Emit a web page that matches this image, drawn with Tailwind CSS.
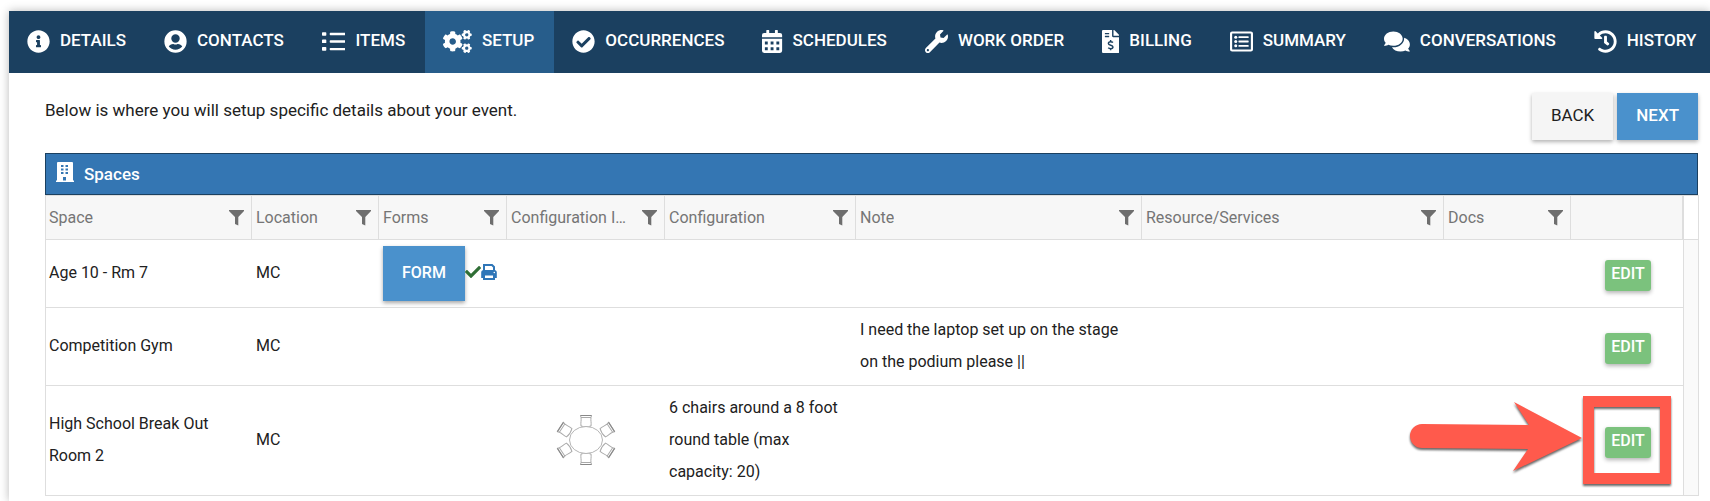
<!DOCTYPE html>
<html lang="en">
<head>
<meta charset="utf-8">
<title>Event Setup</title>
<script src="https://cdn.jsdelivr.net/npm/@tailwindcss/browser@4"></script>
</head>
<body class="bg-white font-['Roboto',sans-serif] text-[#212121] overflow-x-clip">
<svg class="hidden" aria-hidden="true">
  <symbol id="filter" viewBox="0 0 15 16"><path d="M0 0h15v1L9.3 7v8.5L6 14V7L0 1z"/></symbol>
  <symbol id="chair" viewBox="-7 -7 14 14"><path d="M-5.5-5.5h11L5-3.5c-.5 3 .5 5 0 8.500-3 1-7 1-10 0-.5-3.500.5-5.500 0-8.500zM-5-3.500h10" fill="#fff" stroke="#aaa"/><path d="M-5.500-5.500h11" stroke="#888"/></symbol>
</svg>
<div class="mt-[11px] ml-[9px] min-h-[490px] bg-white shadow-[0_0_9px_rgba(0,0,0,0.28)]">
  <nav aria-label="Event sections" class="flex h-[62px] overflow-hidden whitespace-nowrap bg-[#1b4060] text-[17px] font-medium text-white [&>a]:flex [&>a]:shrink-0 [&>a]:items-center [&>a]:gap-[10px] [&>a]:pl-[18px] [&>a]:pr-5 [&>a]:pb-[2px] [&>a:last-child]:pr-0 [&_svg]:h-[23px] [&_svg]:w-auto [&_svg]:fill-current">
    <a href="#details"><svg viewBox="0 0 512 512"><path d="M256 8C119.043 8 8 119.083 8 256c0 136.997 111.043 248 248 248s248-111.003 248-248C504 119.083 392.957 8 256 8zm0 110c23.196 0 42 18.804 42 42s-18.804 42-42 42-42-18.804-42-42 18.804-42 42-42zm56 254c0 6.627-5.373 12-12 12h-88c-6.627 0-12-5.373-12-12v-24c0-6.627 5.373-12 12-12h12v-64h-12c-6.627 0-12-5.373-12-12v-24c0-6.627 5.373-12 12-12h64c6.627 0 12 5.373 12 12v100h12c6.627 0 12 5.373 12 12v24z"/></svg>DETAILS</a>
    <a href="#contacts"><svg viewBox="0 0 512 512"><path fill-rule="evenodd" d="M256 8a248 248 0 1 0 0 496 248 248 0 0 0 0-496zm0 88a94 94 0 1 1 0 188 94 94 0 0 1 0-188zm0 344c-61 0-115-27-150-70 18-35 55-58 96-58 8 0 24 10 54 10s46-10 54-10c41 0 78 23 96 58-35 43-89 70-150 70z"/></svg>CONTACTS</a>
    <a href="#items"><svg viewBox="0 0 528 512"><path d="M16 48h64q16 0 16 16v48q0 16-16 16H16q-16 0-16-16V64q0-16 16-16zm0 164h64q16 0 16 16v48q0 16-16 16H16q-16 0-16-16v-48q0-16 16-16zm0 164h64q16 0 16 16v54q0 16-16 16H16q-16 0-16-16v-54q0-16 16-16zM188 62h324q16 0 16 16v22q0 16-16 16H188q-16 0-16-16V78q0-16 16-16zm0 168h324q16 0 16 16v22q0 16-16 16H188q-16 0-16-16v-22q0-16 16-16zm0 168h324q16 0 16 16v22q0 16-16 16H188q-16 0-16-16v-22q0-16 16-16z"/></svg>ITEMS</a>
    <a href="#setup" aria-current="page" class="bg-[#275d8b]"><svg viewBox="0 0 640 512"><path id="cog" d="M512.1 191l-8.2 14.3c-3 5.3-9.4 7.5-15.1 5.4-11.8-4.4-22.6-10.7-32.1-18.6-4.6-3.8-5.8-10.5-2.8-15.7l8.2-14.3c-6.9-8-12.3-17.3-15.9-27.4h-16.5c-6 0-11.2-4.3-12.2-10.3-2-12-2.1-24.6 0-37.1 1-6 6.2-10.4 12.2-10.4h16.5c3.6-10.1 9-19.4 15.9-27.4l-8.2-14.3c-3-5.2-1.9-11.9 2.8-15.7 9.5-7.9 20.4-14.2 32.1-18.6 5.7-2.1 12.1.1 15.1 5.4l8.2 14.3c10.5-1.9 21.2-1.9 31.7 0L552 6.3c3-5.3 9.4-7.5 15.1-5.4 11.8 4.4 22.6 10.7 32.1 18.6 4.6 3.8 5.8 10.5 2.8 15.7l-8.2 14.3c6.9 8 12.3 17.3 15.9 27.4h16.5c6 0 11.2 4.3 12.2 10.3 2 12 2.1 24.6 0 37.1-1 6-6.2 10.4-12.2 10.4h-16.5c-3.6 10.1-9 19.4-15.9 27.4l8.2 14.3c3 5.2 1.900 11.900-2.800 15.700-9.500 7.900-20.400 14.200-32.100 18.600-5.700 2.100-12.100-.1-15.100-5.400l-8.200-14.300c-10.400 1.900-21.200 1.900-31.700 0zm-10.500-58.800c38.500 29.600 82.400-14.300 52.800-52.800-38.500-29.700-82.400 14.300-52.800 52.800z"/><use href="#cog" y="300"/><path d="M386.300 286.100l33.700 16.800c10.100 5.800 14.500 18.100 10.500 29.100-8.900 24.200-26.400 46.400-42.600 65.800-7.400 8.900-20.200 11.100-30.300 5.300l-29.100-16.800c-16 13.700-34.600 24.600-54.900 31.700v33.600c0 11.600-8.300 21.600-19.700 23.600-24.600 4.200-50.400 4.400-75.900 0-11.500-2-20-11.900-20-23.600V418c-20.300-7.200-38.900-18-54.900-31.700L74 403c-10 5.800-22.900 3.600-30.300-5.300-16.200-19.400-33.300-41.600-42.200-65.700-4-10.900.4-23.200 10.500-29.100l33.300-16.800c-3.900-20.900-3.900-42.400 0-63.400L12 205.800c-10.100-5.800-14.600-18.100-10.500-29 8.900-24.200 26-46.400 42.200-65.800 7.400-8.900 20.200-11.100 30.300-5.300l29.100 16.800c16-13.700 34.600-24.600 54.900-31.700V57.100c0-11.500 8.200-21.500 19.600-23.500 24.600-4.200 50.500-4.400 76-.1 11.500 2 20 11.900 20 23.600v33.600c20.300 7.200 38.900 18 54.900 31.700l29.100-16.800c10-5.800 22.900-3.600 30.300 5.300 16.200 19.400 33.200 41.600 42.100 65.800 4 10.900.1 23.200-10 29.100l-33.700 16.800c3.900 21 3.900 42.500 0 63.500zm-117.600 21.100c59.200-77-28.700-164.900-105.700-105.700-59.200 77 28.700 164.900 105.700 105.700z"/></svg>SETUP</a>
    <a href="#occurrences"><svg viewBox="0 0 512 512"><path d="M504 256c0 136.967-111.033 248-248 248S8 392.967 8 256 119.033 8 256 8s248 111.033 248 248zM227.314 387.314l184-184c6.248-6.248 6.248-16.379 0-22.627l-22.627-22.627c-6.248-6.249-16.379-6.249-22.628 0L216 308.118l-70.059-70.059c-6.248-6.248-16.379-6.248-22.628 0l-22.627 22.627c-6.248 6.248-6.248 16.379 0 22.627l104 104c6.249 6.249 16.379 6.249 22.628.001z"/></svg>OCCURRENCES</a>
    <a href="#schedules"><svg viewBox="0 0 448 512"><path fill-rule="evenodd" d="M400 64h-48V12q0-12-12-12h-40q-12 0-12 12v52H160V12q0-12-12-12h-40q-12 0-12 12v52H48Q0 64 0 112v48h448v-48q0-48-48-48zM0 192h448v272q0 48-48 48H48q-48 0-48-48zm64 64v64h64v-64zm128 0v64h64v-64zm128 0v64h64v-64zM64 384v64h64v-64zm128 0v64h64v-64zm128 0v64h64v-64z"/></svg>SCHEDULES</a>
    <a href="#work-order"><svg viewBox="0 0 512 512"><path d="M507.730 109.100c-2.240-9.030-13.540-12.090-20.120-5.510l-74.360 74.360-67.880-11.310-11.310-67.880 74.360-74.360c6.620-6.620 3.430-17.900-5.660-20.160-47.380-11.740-99.550.91-136.580 37.930-39.640 39.640-50.550 97.100-34.050 147.200L18.740 402.760c-24.990 24.990-24.990 65.510 0 90.500 24.990 24.990 65.510 24.990 90.500 0l213.210-213.210c50.120 16.710 107.470 5.680 147.370-34.220 37.070-37.070 49.700-89.320 37.910-136.730zM64 472c-13.250 0-24-10.750-24-24 0-13.260 10.750-24 24-24s24 10.740 24 24c0 13.250-10.750 24-24 24z"/></svg>WORK ORDER</a>
    <a href="#billing"><svg viewBox="0 0 384 512"><path fill-rule="evenodd" d="M377 105L279 7q-7-7-17-7h-6v128h128v-6q0-10-7-17zM224 136V0H24Q0 0 0 24v464q0 24 24 24h336q24 0 24-24V160H248q-24 0-24-24zM64 72q0-8 8-8h80q8 0 8 8v16q0 8-8 8H72q-8 0-8-8zm0 64q0-8 8-8h80q8 0 8 8v16q0 8-8 8H72q-8 0-8-8z"/><path d="M192 224v32m0 160v32M244 280c-14-14-32-20-52-20-30 0-50 16-50 40 0 54 102 28 102 78 0 24-20 38-52 38-20 0-40-8-54-20" fill="none" stroke="#1b4060" stroke-width="32"/></svg>BILLING</a>
    <a href="#summary"><svg viewBox="0 0 512 512"><path fill-rule="evenodd" d="M48 32h416q48 0 48 48v352q0 48-48 48H48q-48 0-48-48V80q0-48 48-48zm6 48q-6 0-6 6v340q0 6 6 6h404q6 0 6-6V86q0-6-6-6zM200 140h204q12 0 12 12v16q0 12-12 12H200q-12 0-12-12v-16q0-12 12-12zm0 96h204q12 0 12 12v16q0 12-12 12H200q-12 0-12-12v-16q0-12 12-12zm0 96h204q12 0 12 12v16q0 12-12 12H200q-12 0-12-12v-16q0-12 12-12z"/><circle cx="128" cy="160" r="34"/><circle cx="128" cy="256" r="34"/><circle cx="128" cy="352" r="34"/></svg>SUMMARY</a>
    <a href="#conversations"><svg viewBox="0 0 576 512"><path d="M416 192c0-88.400-93.100-160-208-160S0 103.600 0 192c0 34.300 14.100 65.900 38 92-13.400 30.200-35.500 54.200-35.800 54.500-2.200 2.300-2.800 5.700-1.500 8.700S4.800 352 8 352c36.600 0 66.900-12.300 88.700-25 32.200 15.700 70.300 25 111.300 25 114.900 0 208-71.600 208-160zm122 220c23.900-26 38-57.700 38-92 0-66.900-53.500-124.200-129.300-148.100.9 6.600 1.300 13.300 1.300 20.100 0 105.900-107.700 192-240 192-10.800 0-21.300-.8-31.700-1.900C207.800 439.600 281.800 480 368 480c41 0 79.100-9.200 111.300-25 21.800 12.700 52.100 25 88.700 25 3.200 0 6.100-1.900 7.300-4.800 1.300-2.900.7-6.300-1.500-8.700-.3-.3-22.400-24.200-35.800-54.500z"/></svg>CONVERSATIONS</a>
    <a href="#history"><svg viewBox="0 0 512 512"><path d="M504 255.531c.253 136.640-111.180 248.372-247.820 248.468-59.015.042-113.223-20.530-155.822-54.911-11.077-8.940-11.905-25.541-1.839-35.607l11.267-11.267c8.609-8.609 22.353-9.551 31.891-1.984C173.062 425.135 212.781 440 256 440c101.705 0 184-82.311 184-184 0-101.705-82.311-184-184-184-48.814 0-93.149 18.969-126.068 49.932l50.754 50.754c10.080 10.080 2.941 27.314-11.313 27.314H24c-8.837 0-16-7.163-16-16V38.627c0-14.254 17.234-21.393 27.314-11.314l49.372 49.372C129.209 34.136 189.552 8 256 8c136.810 0 247.747 110.780 248 247.531zm-180.912 78.784l9.823-12.630c8.138-10.463 6.253-25.542-4.210-33.679L288 256.349V152c0-13.255-10.745-24-24-24h-16c-13.255 0-24 10.745-24 24v135.651l65.409 50.874c10.463 8.137 25.541 6.253 33.679-4.210z"/></svg>HISTORY</a>
  </nav>

  <main class="pl-9 pr-3 pt-5">
    <div class="mb-[13px] flex items-start justify-between">
      <p class="pt-[5px] text-[17px]">Below is where you will setup specific details about your event.</p>
      <div class="flex gap-1">
        <button type="button" class="h-[47px] bg-[#f5f5f5] px-[19px] pb-[2px] text-[17px] shadow-[0_2px_4px_rgba(0,0,0,0.3)]">BACK</button>
        <button type="button" class="h-[47px] bg-[#4a91cc] px-[19px] pb-[2px] text-[17px] font-medium text-white shadow-[0_2px_4px_rgba(0,0,0,0.3)]">NEXT</button>
      </div>
    </div>

    <section aria-labelledby="spaces-title">
      <div class="flex h-[42px] items-center gap-[10px] border border-[#1b4060] bg-[#3476b3] px-[10px] text-white">
        <svg class="mb-1 h-5 w-[18px] fill-current" viewBox="0 0 18 20"><path fill-rule="evenodd" d="M2 0h14q1 0 1 1v17.500h1V20H0v-1.500h1V1q0-1 1-1zm3 3v2h2.500V3zm4.500 0v2H12V3zM5 6.500v2h2.500v-2zm4.500 0v2H12v-2zM5 10v2h2.500v-2zm4.500 0v2H12v-2zM7 15v3.500h3V15z"/></svg>
        <h2 id="spaces-title" class="pt-[2px] text-[17px] font-medium">Spaces</h2>
      </div>
      <table class="w-full table-fixed border-separate border-spacing-0 border border-[#dedede] text-left text-base leading-8 [&_td]:pt-[5px] [&_td]:pb-[7px] [&_td]:pr-1 [&_td]:pl-1 [&_td:first-child]:pl-[3px] [&_td]:align-middle [&_td]:border-[#dedede] [&_th]:h-11 [&_th]:border-b [&_th]:border-r [&_th]:border-[#dedede] [&_th]:bg-[#f7f7f7] [&_th]:p-0 [&_th]:pl-1 [&_th]:pr-[7px] [&_th:first-child]:pl-[3px] [&_th]:font-normal [&_th]:text-[#757575] [&_th>div]:flex [&_th>div]:items-center [&_th>div]:justify-between [&_th>div]:gap-2 [&_th_svg]:h-4 [&_th_svg]:w-[15px] [&_th_svg]:fill-[#6e6e6e] [&_th_span]:truncate [&_th_button]:shrink-0">
        <colgroup>
          <col class="w-[206px]"><col class="w-[127px]"><col class="w-[128px]"><col class="w-[158px]"><col class="w-[191px]"><col class="w-[286px]"><col class="w-[302px]"><col class="w-[127px]"><col class="w-[112px]"><col class="w-[15px]">
        </colgroup>
        <thead>
          <tr>
            <th scope="col"><div><span>Space</span><button type="button" aria-label="Filter Space"><svg><use href="#filter"/></svg></button></div></th>
            <th scope="col"><div><span>Location</span><button type="button" aria-label="Filter Location"><svg><use href="#filter"/></svg></button></div></th>
            <th scope="col"><div><span>Forms</span><button type="button" aria-label="Filter Forms"><svg><use href="#filter"/></svg></button></div></th>
            <th scope="col"><div><span>Configuration Image</span><button type="button" aria-label="Filter Configuration Image"><svg><use href="#filter"/></svg></button></div></th>
            <th scope="col"><div><span>Configuration</span><button type="button" aria-label="Filter Configuration"><svg><use href="#filter"/></svg></button></div></th>
            <th scope="col"><div><span>Note</span><button type="button" aria-label="Filter Note"><svg><use href="#filter"/></svg></button></div></th>
            <th scope="col"><div><span>Resource/Services</span><button type="button" aria-label="Filter Resource/Services"><svg><use href="#filter"/></svg></button></div></th>
            <th scope="col"><div><span>Docs</span><button type="button" aria-label="Filter Docs"><svg><use href="#filter"/></svg></button></div></th>
            <th scope="col" aria-label="Actions"></th>
            <td class="border-b border-l"></td>
          </tr>
        </thead>
        <tbody>
          <tr class="h-[68px] [&>td]:border-b">
            <td>Age 10 - Rm 7</td><td>MC</td>
            <td class="pt-[6px]! pb-[6px]!"><div class="flex items-center"><button type="button" class="h-[55px] bg-[#4a91cc] px-[19px] pb-[2px] font-medium text-white shadow-[0_2px_4px_rgba(0,0,0,0.35)]">FORM</button><svg class="mb-1 size-4 shrink-0 fill-[#2f6e35]" viewBox="0 0 512 512" role="img" aria-label="Completed"><path d="M173.898 439.404l-166.400-166.400c-9.997-9.997-9.997-26.206 0-36.204l36.203-36.204c9.997-9.998 26.207-9.998 36.204 0L192 312.690 432.095 72.596c9.997-9.997 26.207-9.997 36.204 0l36.203 36.204c9.997 9.997 9.997 26.206 0 36.204l-294.400 294.401c-9.998 9.997-26.207 9.997-36.204-.001z"/></svg><a href="#print" aria-label="Print form"><svg class="mb-1 size-4" viewBox="0 0 16 16"><path d="M3 7V1h8l2 2v4M3 13H1.200V8.500Q1.200 7 2.700 7h10.600q1.500 0 1.500 1.500V13H13M3 10.500h10V15H3z" fill="none" stroke="#2f76b8" stroke-width="2"/><path d="M1 7h14v3.500H1z" fill="#2f76b8"/><circle cx="13.300" cy="8.500" r=".8" fill="#fff"/></svg></a></div></td>
            <td></td><td></td><td></td><td></td><td></td>
            <td class="pt-[8px]! pb-[6px]! pl-[6px]! text-center"><button type="button" class="h-[31px] rounded-[3px] bg-[#7bc27d] px-[6px] pb-[3px] align-middle leading-7 font-medium text-white shadow-[0_2px_4px_rgba(0,0,0,0.3)]">EDIT</button></td>
            <td rowspan="3" class="border-b-0! border-l bg-[#fafafa]"></td>
          </tr>
          <tr class="h-[78px] [&>td]:border-b">
            <td>Competition Gym</td><td>MC</td><td></td><td></td><td></td>
            <td>I need the laptop set up on the stage on the podium please ||</td>
            <td></td><td></td>
            <td class="pt-[8px]! pb-[6px]! pl-[6px]! text-center"><button type="button" class="h-[31px] rounded-[3px] bg-[#7bc27d] px-[6px] pb-[3px] align-middle leading-7 font-medium text-white shadow-[0_2px_4px_rgba(0,0,0,0.3)]">EDIT</button></td>
          </tr>
          <tr class="h-[109px]">
            <td>High School Break Out Room 2</td><td>MC</td><td></td>
            <td>
              <svg class="mx-auto h-[52px] w-[60px]" viewBox="-30 -26 60 52" role="img" aria-label="Round table with six chairs">
                <use href="#chair" x="-7" y="-7" width="14" height="14" transform="translate(0 -19)"/>
                <use href="#chair" x="-7" y="-7" width="14" height="14" transform="translate(0 19) rotate(180)"/>
                <use href="#chair" x="-7" y="-7" width="14" height="14" transform="translate(21 -10) rotate(57)"/>
                <use href="#chair" x="-7" y="-7" width="14" height="14" transform="translate(21 10) rotate(123)"/>
                <use href="#chair" x="-7" y="-7" width="14" height="14" transform="translate(-21 -10) rotate(-57)"/>
                <use href="#chair" x="-7" y="-7" width="14" height="14" transform="translate(-21 10) rotate(-123)"/>
                <ellipse rx="16.500" ry="13.500" fill="#fff" stroke="#b5b5b5"/>
              </svg>
            </td>
            <td>6 chairs around a 8 foot round table (max capacity: 20)</td>
            <td></td><td></td><td></td>
            <td class="pt-[8px]! pb-[6px]! pl-[6px]! text-center">
              <div class="relative inline-block align-middle leading-none">
                <button type="button" class="h-[31px] rounded-[3px] bg-[#7bc27d] px-[6px] pb-[3px] align-middle leading-7 font-medium text-white shadow-[0_2px_4px_rgba(0,0,0,0.3)]">EDIT</button>
                <!-- Callout frame and arrow over the Edit button -->
                <svg class="pointer-events-none absolute -top-8 right-[-24px] h-[96px] w-[268px] drop-shadow-[0_2px_1px_rgba(0,0,0,0.6)]" viewBox="0 0 268 96" fill="#ff5a4c" aria-hidden="true">
                  <path fill-rule="evenodd" d="M176 1h88v88h-88zM187 12v66h66V12z"/>
                  <path d="M15 29l107 1-15-23 68 36-69 33 15-22-106-1a12 12 0 0 1 0-24z"/>
                </svg>
              </div>
            </td>
          </tr>
        </tbody>
      </table>
    </section>
  </main>
</div>
</body>
</html>
